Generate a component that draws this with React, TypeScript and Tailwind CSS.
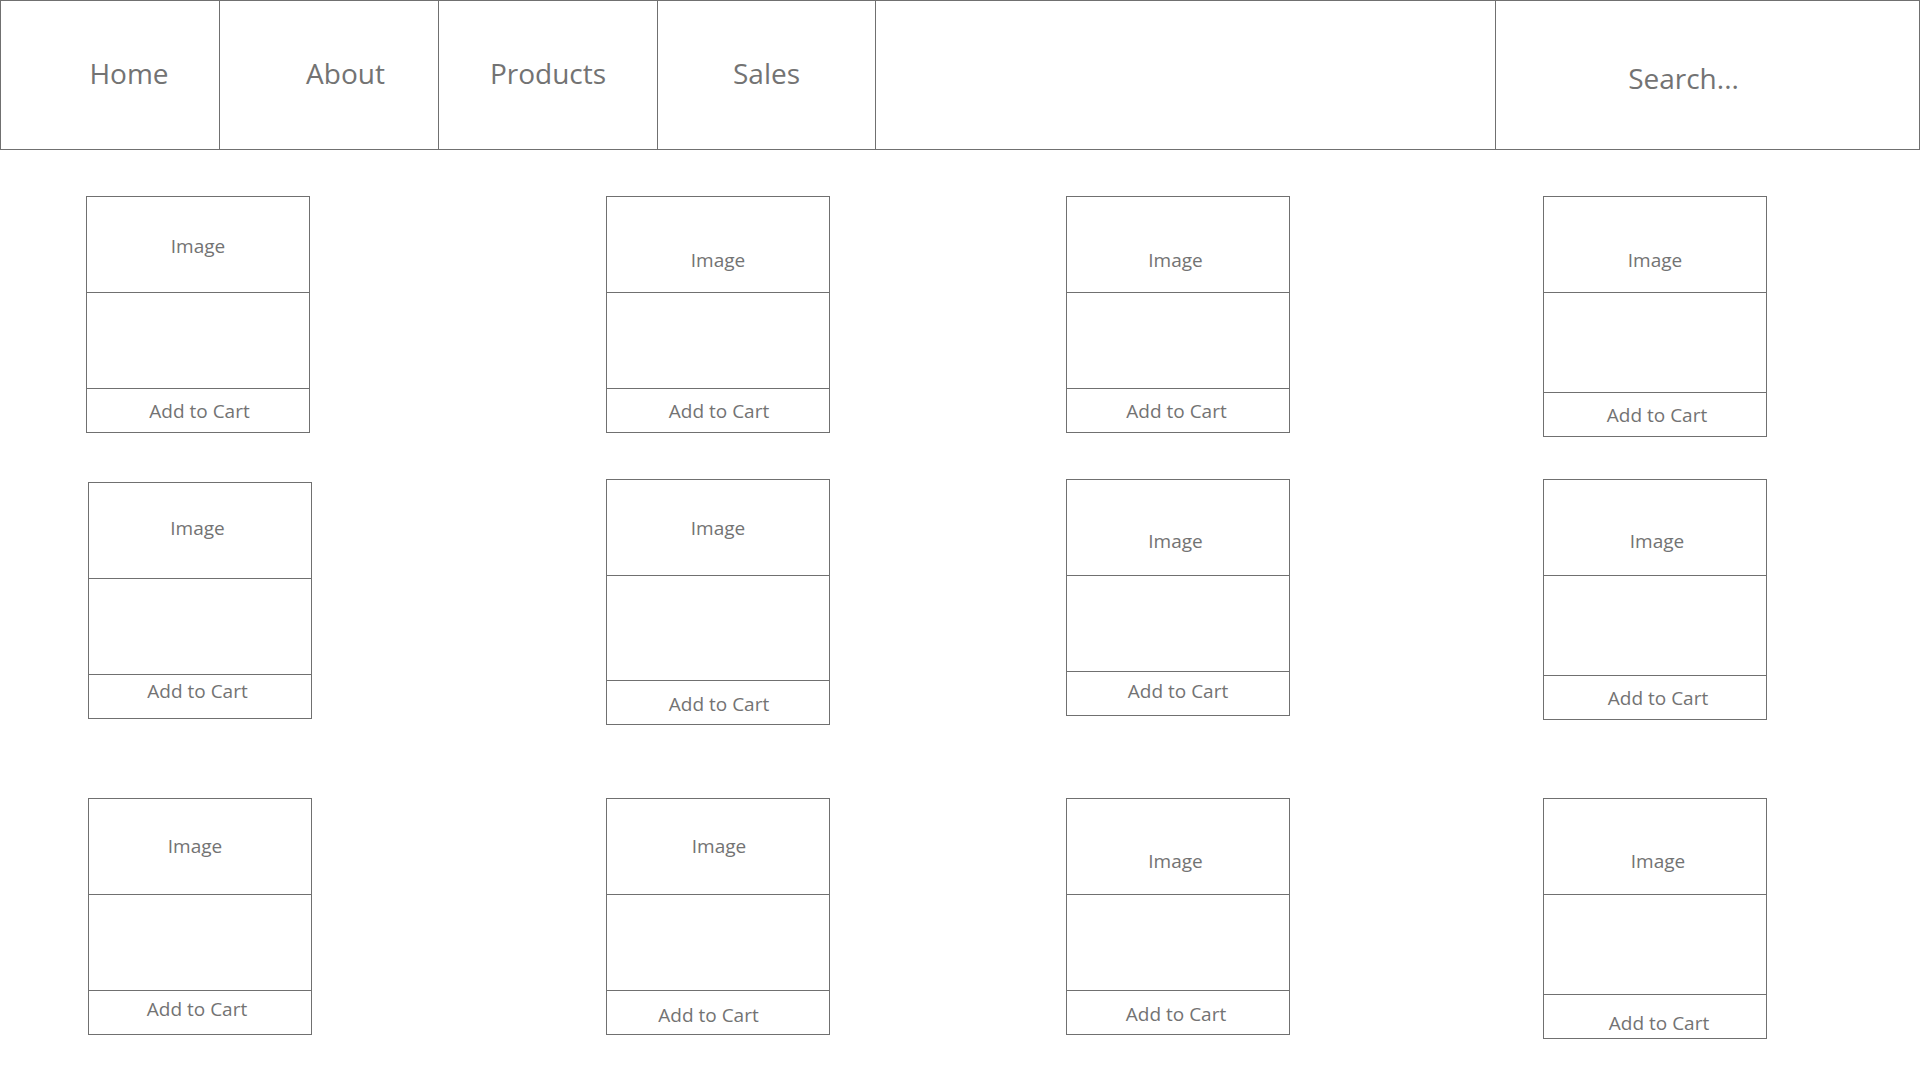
import React from "react";

type Card = {
  cls: string; // placement / offset
  s2: string; // middle section height
  img: string; // image label offset
  add: string; // add-to-cart label offset
};

const rows: Card[][] = [
  [
    { cls: "", s2: "h-[96px]", img: "pt-[3px]", add: "pt-[2px] pl-[3px]" },
    { cls: "", s2: "h-[96px]", img: "pt-[31px]", add: "pt-[2px] pl-[2px]" },
    { cls: "", s2: "h-[96px]", img: "pt-[31px] pr-[5px]", add: "pt-[2px] pr-[3px]" },
    { cls: "", s2: "h-[100px]", img: "pt-[31px]", add: "pt-[2px] pl-[4px]" },
  ],
  [
    { cls: "mt-[3px] ml-[2px]", s2: "h-[96px]", img: "pb-[4px] pr-[5px]", add: "pb-[10px] pr-[5px]" },
    { cls: "", s2: "h-[105px]", img: "pt-[1px]", add: "pt-[4px] pl-[2px]" },
    { cls: "", s2: "h-[96px]", img: "pt-[27px] pr-[5px]", add: "pb-[4px]" },
    { cls: "", s2: "h-[100px]", img: "pt-[27px] pl-[4px]", add: "pt-[2px] pl-[6px]" },
  ],
  [
    { cls: "ml-[2px]", s2: "h-[96px]", img: "pr-[10px]", add: "pb-[6px] pr-[6px]" },
    { cls: "", s2: "h-[96px]", img: "pt-[0px] pl-[2px]", add: "pt-[6px] pr-[19px]" },
    { cls: "", s2: "h-[96px]", img: "pt-[30px] pr-[5px]", add: "pt-[4px] pr-[4px]" },
    { cls: "", s2: "h-[100px]", img: "pt-[30px] pl-[6px]", add: "pt-[13px] pl-[8px]" },
  ],
];

function ProductCard({ c }: { c: Card }) {
  return (
    <div className={`w-[224px] border border-[#707070] bg-white ${c.cls}`}>
      <div className={`h-[96px] border-b border-[#707070] flex items-center justify-center ${c.img}`}>
        <span className="text-[19px] leading-none">Image</span>
      </div>
      <div className={`${c.s2} border-b border-[#707070]`} />
      <div className={`h-[43px] flex items-center justify-center ${c.add}`}>
        <span className="text-[19px] leading-none">Add to Cart</span>
      </div>
    </div>
  );
}

export default function App() {
  return (
    <div
      className="w-[1920px] h-[1080px] bg-white text-[#737373] overflow-hidden"
      style={{ fontFamily: '"Open Sans", "Noto Sans", sans-serif' }}
    >
      <nav className="flex h-[150px] border-t border-b border-[#707070]">
        <div className="w-[219px] border-l border-[#707070] flex items-center justify-center pl-[38px] pb-[5px] text-[28px]">
          Home
        </div>
        <div className="w-[219px] border-l border-[#707070] flex items-center justify-center pl-[33px] pb-[5px] text-[28px]">
          About
        </div>
        <div className="w-[219px] border-l border-[#707070] flex items-center justify-center pb-[5px] text-[28px]">
          Products
        </div>
        <div className="w-[218px] border-l border-[#707070] flex items-center justify-center pb-[5px] text-[28px]">
          Sales
        </div>
        <div className="w-[620px] border-l border-[#707070]" />
        <div className="flex-1 border-l border-r border-[#707070] flex items-center justify-center pr-[48px] pt-[5px] text-[28px]">
          Search...
        </div>
      </nav>
      <main className="pt-[46px] pl-[86px]">
        <div className="grid grid-cols-[520px_460px_477px_224px] grid-rows-[283px_319px_auto] items-start">
          {rows.flat().map((c, i) => (
            <ProductCard key={i} c={c} />
          ))}
        </div>
      </main>
    </div>
  );
}
